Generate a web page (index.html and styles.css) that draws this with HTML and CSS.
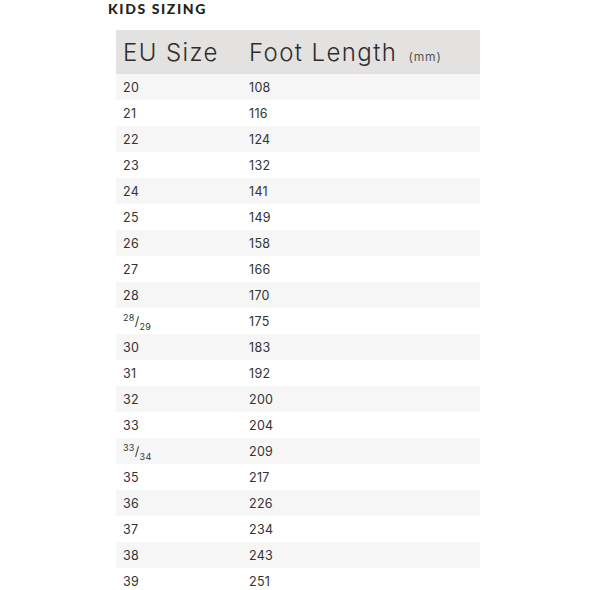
FILE: index.html
```html
<!DOCTYPE html>
<html>
<head>
<meta charset="utf-8">
<link rel="stylesheet" href="styles.css">
</head>
<body>
<div class="page">
  <h1 class="title">KIDS SIZING</h1>
  <table class="chart">
    <thead>
      <tr><th class="c1">EU Size</th><th class="c2">Foot Length <span class="unit">(mm)</span></th></tr>
    </thead>
    <tbody>
      <tr><td>20</td><td>108</td></tr>
      <tr><td>21</td><td>116</td></tr>
      <tr><td>22</td><td>124</td></tr>
      <tr><td>23</td><td>132</td></tr>
      <tr><td>24</td><td>141</td></tr>
      <tr><td>25</td><td>149</td></tr>
      <tr><td>26</td><td>158</td></tr>
      <tr><td>27</td><td>166</td></tr>
      <tr><td>28</td><td>170</td></tr>
      <tr><td><sup>28</sup>/<sub>29</sub></td><td>175</td></tr>
      <tr><td>30</td><td>183</td></tr>
      <tr><td>31</td><td>192</td></tr>
      <tr><td>32</td><td>200</td></tr>
      <tr><td>33</td><td>204</td></tr>
      <tr><td><sup>33</sup>/<sub>34</sub></td><td>209</td></tr>
      <tr><td>35</td><td>217</td></tr>
      <tr><td>36</td><td>226</td></tr>
      <tr><td>37</td><td>234</td></tr>
      <tr><td>38</td><td>243</td></tr>
      <tr><td>39</td><td>251</td></tr>
    </tbody>
  </table>
</div>
</body>
</html>
```
FILE: styles.css
```css
html, body { margin: 0; padding: 0; background: #fff; }
body { font-family: "Inter", "Lato", sans-serif; color: #333; }
.page { padding-left: 108px; padding-top: 0; }
.title {
  margin: 0;
  font-family: "Lato", sans-serif;
  font-weight: 900;
  font-size: 14px;
  letter-spacing: 1.6px;
  line-height: 18px;
  color: #222;
}
.chart {
  margin-left: 8px;
  margin-top: 12px;
  width: 364px;
  border-collapse: collapse;
  table-layout: fixed;
}
.chart thead th {
  background: #e3e2e0;
  height: 44px;
  padding: 0;
  text-align: left;
  font-weight: 300;
  font-size: 24px;
  letter-spacing: 1.4px;
  color: #2e2e2e;
  vertical-align: middle;
  white-space: nowrap;
}
.chart .c1 { width: 133px; padding-left: 7px; box-sizing: border-box; }
.chart .c2 { padding-left: 0; }
.unit { font-size: 12px; letter-spacing: 0.9px; color: #555; margin-left: 3px; font-weight: 400; }
.chart td {
  height: 26px;
  padding: 0;
  font-size: 12.5px;
  letter-spacing: 0.3px;
  color: #333;
  vertical-align: middle;
}
.chart td:first-child { padding-left: 7px; }
.chart tbody tr:nth-child(odd) td { background: #f6f6f6; }
.chart sup, .chart sub { font-size: 9px; line-height: 0; }
```
